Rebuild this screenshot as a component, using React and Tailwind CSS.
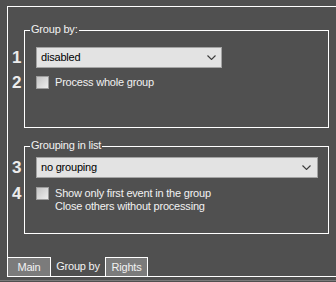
import React from "react";

function Chevron() {
  return (
    <svg width="9" height="5" viewBox="0 0 9 5">
      <path d="M0.5 0.5 L4.5 4.5 L8.5 0.5" fill="none" stroke="#3c3c3c" strokeWidth="1.1" />
    </svg>
  );
}

function Num({ n }) {
  return (
    <span className="absolute left-[-24px] top-0 h-[21px] text-[17px] font-bold leading-[21px] text-[#ececec]">
      {n}
    </span>
  );
}

function Check({ n, lines }) {
  return (
    <div className="relative flex items-start">
      <span className="absolute left-[-24px] top-[-4px] h-[21px] text-[17px] font-bold leading-[21px] text-[#ececec]">
        {n}
      </span>
      <div className="h-[13px] w-[13px] shrink-0 border border-[#9c9c9c] bg-gradient-to-br from-[#c4c4c4] to-[#ededed]" />
      <div className="ml-[6px] flex flex-col leading-[13px] text-[#f2f2f2]">
        {lines.map((l) => (
          <span key={l}>{l}</span>
        ))}
      </div>
    </div>
  );
}

export default function App() {
  return (
    <div className="flex h-[282px] w-[336px] flex-col overflow-hidden bg-[#505050] pl-[7px] pt-[6px] font-['Liberation_Sans',Arial,sans-serif] text-[11px] tracking-[-0.2px]">
      <div className="flex h-[271px] w-[340px] shrink-0 flex-col border-b border-l border-t border-white">
        {/* Group by */}
        <div className="relative ml-[16px] mt-[23px] h-[98px] w-[305px] border border-white pl-[11px] pt-[16px]">
          <span className="absolute left-[5px] top-[-8px] bg-[#505050] px-[1px] leading-[13px] text-[#f2f2f2]">
            Group by:
          </span>
          <div className="relative">
            <Num n="1" />
            <div className="flex h-[21px] w-[186px] items-center justify-between border border-[#a3a3a3] bg-[#e3e3e3] pl-[4px] pr-[5px] text-black">
              <span>disabled</span>
              <Chevron />
            </div>
          </div>
          <div className="mt-[8px]">
            <Check n="2" lines={["Process whole group"]} />
          </div>
        </div>

        {/* Grouping in list */}
        <div className="relative ml-[16px] mt-[18px] h-[88px] w-[305px] border border-white pl-[11px] pt-[10px]">
          <span className="absolute left-[5px] top-[-8px] bg-[#505050] px-[1px] leading-[13px] text-[#f2f2f2]">
            Grouping in list
          </span>
          <div className="relative">
            <Num n="3" />
            <div className="flex h-[21px] w-[282px] items-center justify-between border border-[#a3a3a3] bg-[#e3e3e3] pl-[4px] pr-[6px] text-black">
              <span>no grouping</span>
              <Chevron />
            </div>
          </div>
          <div className="mt-[9px]">
            <Check
              n="4"
              lines={["Show only first event in the group", "Close others without processing"]}
            />
          </div>
        </div>

        {/* Tabs */}
        <div className="mt-[23px] flex h-[19px]">
          <div className="flex w-[43px] items-center justify-center border-r border-t border-white bg-[#7b7b7b] text-[#f2f2f2]">
            Main
          </div>
          <div className="flex w-[54px] items-center justify-center text-[#f2f2f2]">Group by</div>
          <div className="flex w-[43px] items-center justify-center border-l border-r border-t border-white bg-[#7b7b7b] text-[#f2f2f2]">
            Rights
          </div>
        </div>
      </div>
      <div className="-ml-[7px] mt-[3px] h-[1px] w-[336px] shrink-0 bg-[#7a7a7a]" />
    </div>
  );
}
